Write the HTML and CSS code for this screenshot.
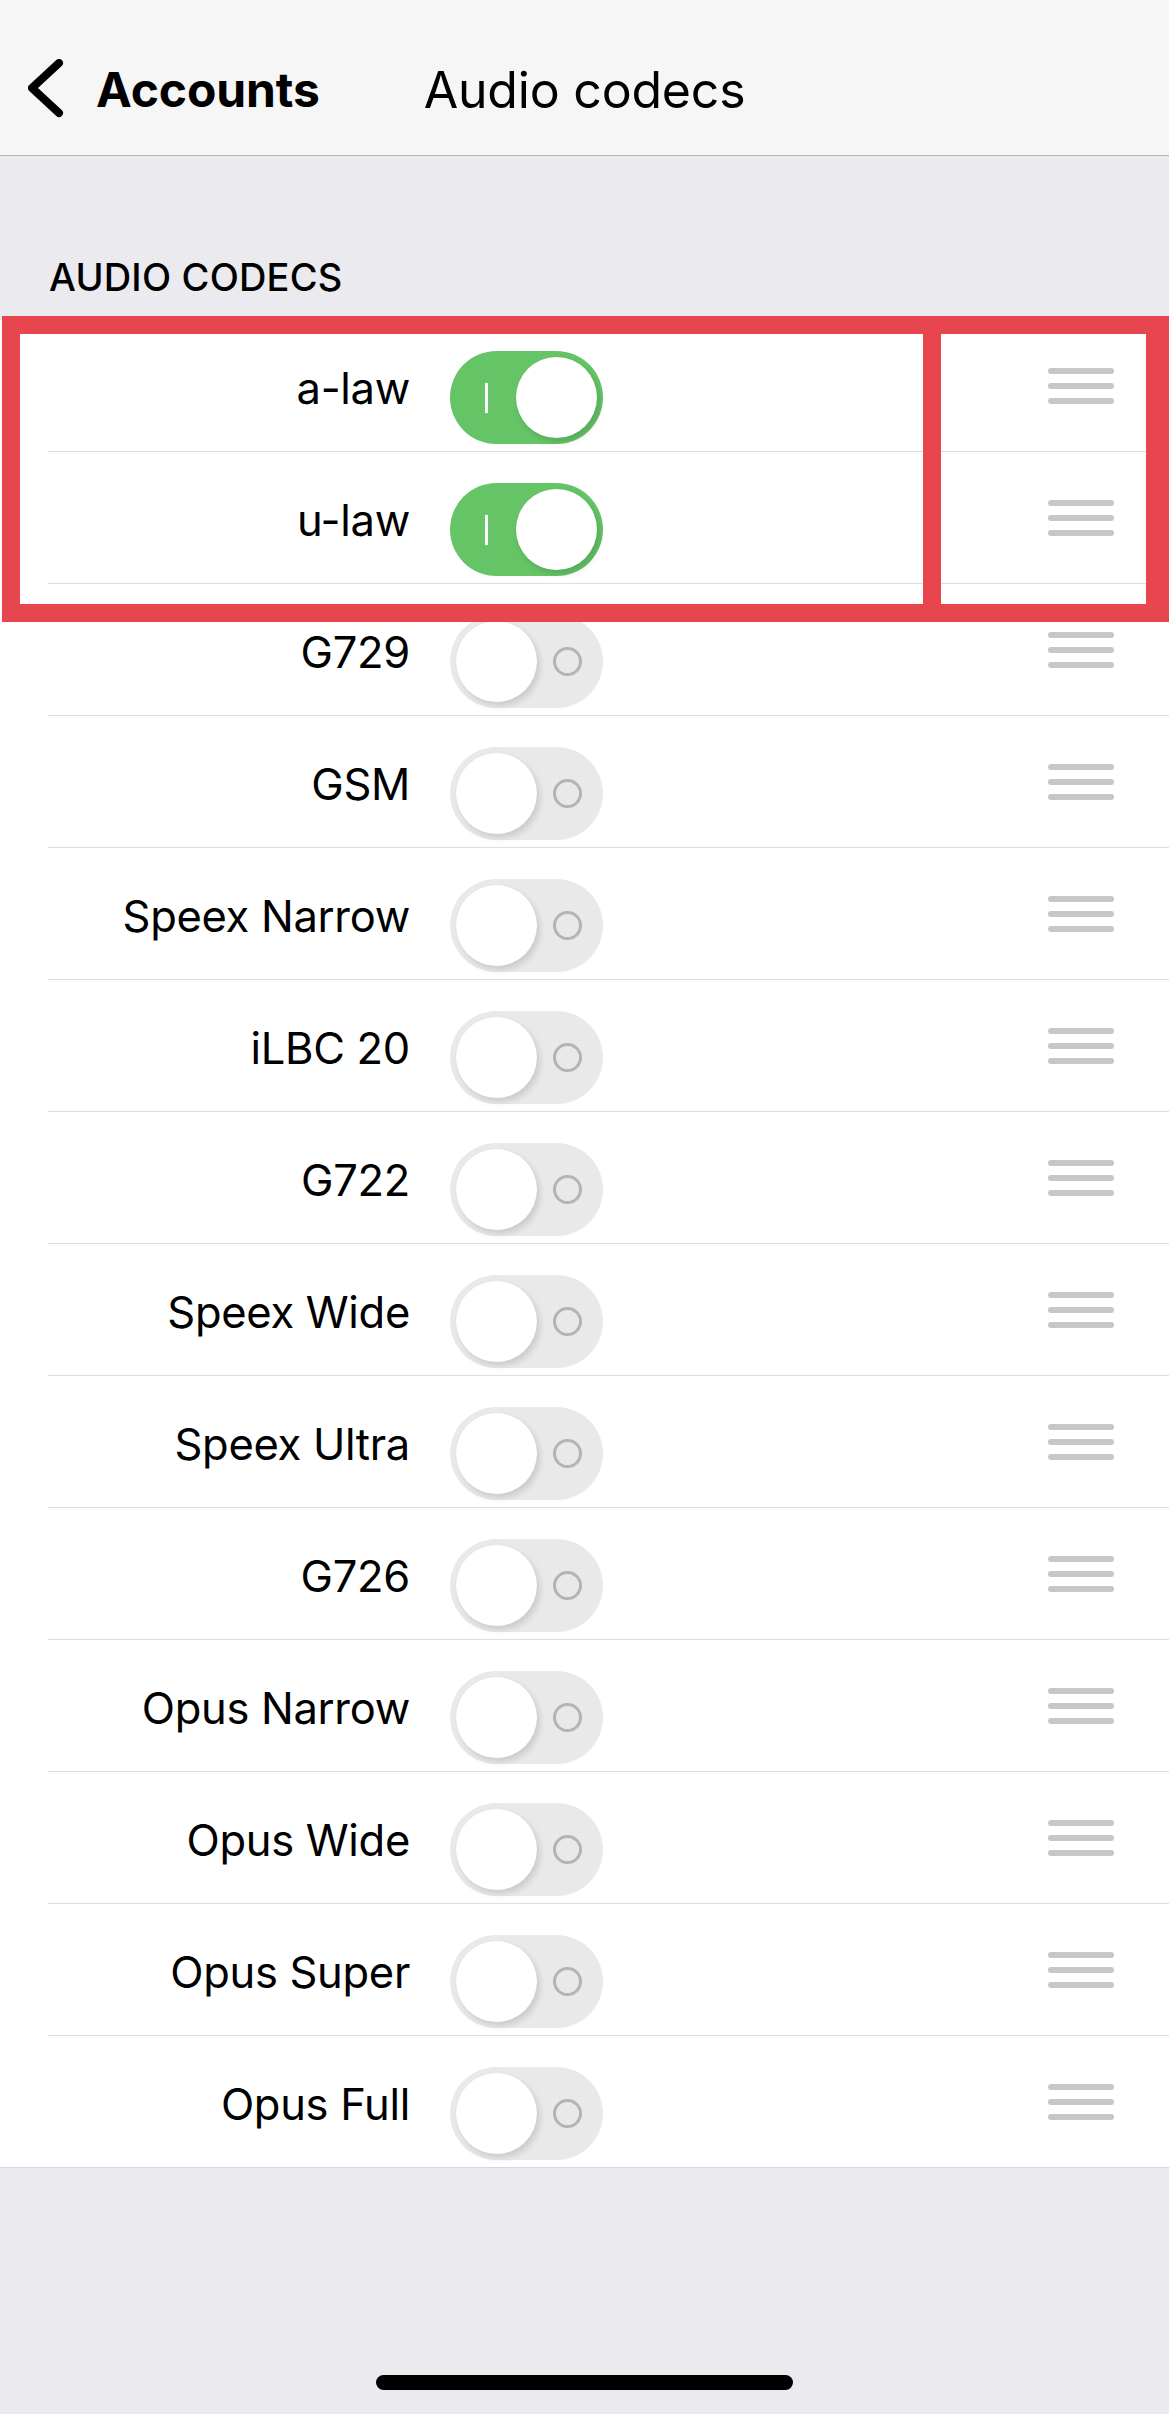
FILE: index.html
```html
<!DOCTYPE html>
<html lang="en">
<head>
<meta charset="utf-8">
<title>Audio codecs</title>
<link rel="stylesheet" href="styles.css">
</head>
<body>
<div class="screen">
  <header class="navbar">
    <div class="nav-left">
      <svg class="chevron" width="40" height="64" viewBox="0 0 40 64" aria-hidden="true">
        <polyline points="31,4 4,29 31,54" fill="none" stroke="#000" stroke-width="8" stroke-linecap="round" stroke-linejoin="round"/>
      </svg>
      <span class="back-label">Accounts</span>
    </div>
    <div class="nav-title">Audio codecs</div>
    <div class="nav-right"></div>
  </header>

  <div class="section-header">AUDIO CODECS</div>

  <div class="list">
    <div class="row"><span class="label">a-law</span><span class="toggle on"><span class="mark-i"></span><span class="knob"></span></span><span class="handle"><i></i><i></i><i></i></span></div>
    <div class="row"><span class="label">u-law</span><span class="toggle on"><span class="mark-i"></span><span class="knob"></span></span><span class="handle"><i></i><i></i><i></i></span></div>
    <div class="row"><span class="label">G729</span><span class="toggle"><span class="knob"></span><span class="mark-o"></span></span><span class="handle"><i></i><i></i><i></i></span></div>
    <div class="row"><span class="label">GSM</span><span class="toggle"><span class="knob"></span><span class="mark-o"></span></span><span class="handle"><i></i><i></i><i></i></span></div>
    <div class="row"><span class="label">Speex Narrow</span><span class="toggle"><span class="knob"></span><span class="mark-o"></span></span><span class="handle"><i></i><i></i><i></i></span></div>
    <div class="row"><span class="label">iLBC 20</span><span class="toggle"><span class="knob"></span><span class="mark-o"></span></span><span class="handle"><i></i><i></i><i></i></span></div>
    <div class="row"><span class="label">G722</span><span class="toggle"><span class="knob"></span><span class="mark-o"></span></span><span class="handle"><i></i><i></i><i></i></span></div>
    <div class="row"><span class="label">Speex Wide</span><span class="toggle"><span class="knob"></span><span class="mark-o"></span></span><span class="handle"><i></i><i></i><i></i></span></div>
    <div class="row"><span class="label">Speex Ultra</span><span class="toggle"><span class="knob"></span><span class="mark-o"></span></span><span class="handle"><i></i><i></i><i></i></span></div>
    <div class="row"><span class="label">G726</span><span class="toggle"><span class="knob"></span><span class="mark-o"></span></span><span class="handle"><i></i><i></i><i></i></span></div>
    <div class="row"><span class="label">Opus Narrow</span><span class="toggle"><span class="knob"></span><span class="mark-o"></span></span><span class="handle"><i></i><i></i><i></i></span></div>
    <div class="row"><span class="label">Opus Wide</span><span class="toggle"><span class="knob"></span><span class="mark-o"></span></span><span class="handle"><i></i><i></i><i></i></span></div>
    <div class="row"><span class="label">Opus Super</span><span class="toggle"><span class="knob"></span><span class="mark-o"></span></span><span class="handle"><i></i><i></i><i></i></span></div>
    <div class="row last"><span class="label">Opus Full</span><span class="toggle"><span class="knob"></span><span class="mark-o"></span></span><span class="handle"><i></i><i></i><i></i></span></div>

    <div class="highlight"><span class="highlight-divider"></span></div>
  </div>

  <div class="home-indicator"></div>
</div>
</body>
</html>
```

FILE: styles.css
```css
* {
  box-sizing: border-box;
}

html, body {
  margin: 0;
  padding: 0;
}

body {
  background: #eaeaef;
  font-family: "Inter", "Noto Sans", "Liberation Sans", sans-serif;
  color: #000;
}

.screen {
  width: 1169px;
  min-height: 2414px;
  position: relative;
}

/* Navigation bar */
.navbar {
  height: 156px;
  background: #f6f6f6;
  border-bottom: 1px solid #b2b2b2;
  display: grid;
  grid-template-columns: 1fr auto 1fr;
  align-items: center;
  padding-top: 24px;
}

.nav-left {
  display: flex;
  align-items: center;
  padding-left: 28px;
}

.chevron {
  display: block;
  margin-top: 2px;
}

.back-label {
  margin-left: 28px;
  font-size: 48px;
  font-weight: 700;
  letter-spacing: -0.1px;
}

.nav-title {
  font-size: 50px;
  font-weight: 400;
  letter-spacing: -0.2px;
}

/* Section header */
.section-header {
  padding: 102px 0 24px 49px;
  font-size: 38px;
  line-height: 38px;
  font-weight: 500;
  letter-spacing: 0.2px;
  height: 164px;
}

/* List */
.list {
  position: relative;
  background: #fff;
  padding-left: 48px;
  border-bottom: 1px solid #d9d9dc;
}

.row {
  height: 132px;
  display: flex;
  align-items: center;
  border-bottom: 1px solid #dedee0;
}

.row.last {
  height: 131px;
  border-bottom: none;
}

.label {
  width: 362px;
  text-align: right;
  font-size: 43.5px;
  letter-spacing: -0.3px;
  white-space: nowrap;
  padding-top: 5px;
}

/* Switch */
.toggle {
  position: relative;
  margin-left: 40px;
  width: 153px;
  height: 93px;
  border-radius: 47px;
  background: #e9e9ea;
  align-self: flex-start;
  margin-top: 31px;
  display: flex;
  align-items: center;
  padding: 0 6px;
}

.toggle.on {
  background: #65c466;
}

.knob {
  width: 81px;
  height: 81px;
  border-radius: 50%;
  background: #fff;
  box-shadow: 3px 4px 6px rgba(0, 0, 0, 0.13), 0 0 1px rgba(0, 0, 0, 0.08);
  flex: none;
}

.toggle.on .knob {
  margin-left: auto;
}

.mark-i {
  width: 3px;
  height: 30px;
  background: #fff;
  margin-left: 29px;
  flex: none;
}

.mark-o {
  width: 29px;
  height: 29px;
  border-radius: 50%;
  border: 3px solid #b4b4b6;
  margin-left: 16px;
  flex: none;
}

/* Reorder handle */
.handle {
  margin-left: auto;
  margin-right: 55px;
  width: 66px;
  display: flex;
  flex-direction: column;
  gap: 9px;
}

.handle i {
  display: block;
  height: 6px;
  border-radius: 3px;
  background: #c7c7c9;
}

/* Annotation highlight */
.highlight {
  position: absolute;
  left: 2px;
  top: -4px;
  width: 1167px;
  height: 306px;
  border: 18px solid #e8464e;
  border-right-width: 23px;
  pointer-events: none;
}

.highlight-divider {
  position: absolute;
  top: 0;
  bottom: 0;
  left: 903px;
  width: 18px;
  background: #e8464e;
}

/* Home indicator */
.home-indicator {
  width: 417px;
  height: 15px;
  border-radius: 8px;
  background: #000;
  margin: 207px auto 0;
}
```
